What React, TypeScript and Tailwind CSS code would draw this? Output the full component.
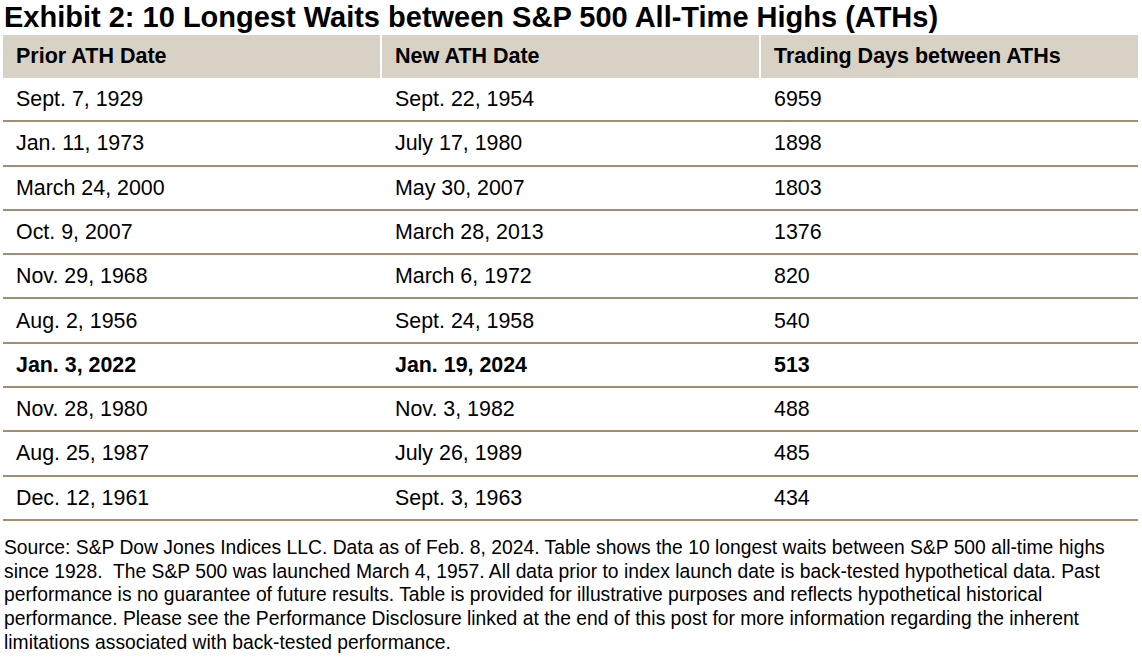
const rows: [string, string, string, boolean?][] = [
  ["Sept. 7, 1929", "Sept. 22, 1954", "6959"],
  ["Jan. 11, 1973", "July 17, 1980", "1898"],
  ["March 24, 2000", "May 30, 2007", "1803"],
  ["Oct. 9, 2007", "March 28, 2013", "1376"],
  ["Nov. 29, 1968", "March 6, 1972", "820"],
  ["Aug. 2, 1956", "Sept. 24, 1958", "540"],
  ["Jan. 3, 2022", "Jan. 19, 2024", "513", true],
  ["Nov. 28, 1980", "Nov. 3, 1982", "488"],
  ["Aug. 25, 1987", "July 26, 1989", "485"],
  ["Dec. 12, 1961", "Sept. 3, 1963", "434"],
];

export default function App() {
  return (
    <div className="w-[1142px] h-[661px] bg-white text-black font-['Liberation_Sans',Arial,sans-serif] overflow-hidden">
      <h1 className="pl-[4px] pt-[2px] text-[29px] leading-[31px] font-bold whitespace-nowrap">
        Exhibit 2: 10 Longest Waits between S&amp;P 500 All-Time Highs (ATHs)
      </h1>
      <div className="ml-[3px] mt-[2px] w-[1135px]">
        <div className="grid grid-cols-[377px_377px_377px] gap-x-[2px] h-[43px]">
          {["Prior ATH Date", "New ATH Date", "Trading Days between ATHs"].map((h) => (
            <div key={h} className="bg-[#d8d1c5] flex items-center pl-[13px] text-[21.5px] font-bold">
              {h}
            </div>
          ))}
        </div>
        {rows.map(([a, b, c, bold]) => (
          <div
            key={a}
            className={`grid grid-cols-[377px_377px_377px] gap-x-[2px] h-[44.3px] items-center border-b-2 border-[#a48e6e] text-[21.4px] ${bold ? "font-bold" : ""}`}
          >
            <div className="pl-[13px]">{a}</div>
            <div className="pl-[13px]">{b}</div>
            <div className="pl-[13px]">{c}</div>
          </div>
        ))}
      </div>
      <p className="pl-[4px] pt-[15px] text-[19.3px] leading-[23.7px] whitespace-nowrap">
        Source: S&amp;P Dow Jones Indices LLC. Data as of Feb. 8, 2024. Table shows the 10 longest waits between S&amp;P 500 all-time highs
        <br />
        since 1928.&nbsp; The S&amp;P 500 was launched March 4, 1957. All data prior to index launch date is back-tested hypothetical data. Past
        <br />
        performance is no guarantee of future results. Table is provided for illustrative purposes and reflects hypothetical historical
        <br />
        performance. Please see the Performance Disclosure linked at the end of this post for more information regarding the inherent
        <br />
        limitations associated with back-tested performance.
      </p>
    </div>
  );
}
